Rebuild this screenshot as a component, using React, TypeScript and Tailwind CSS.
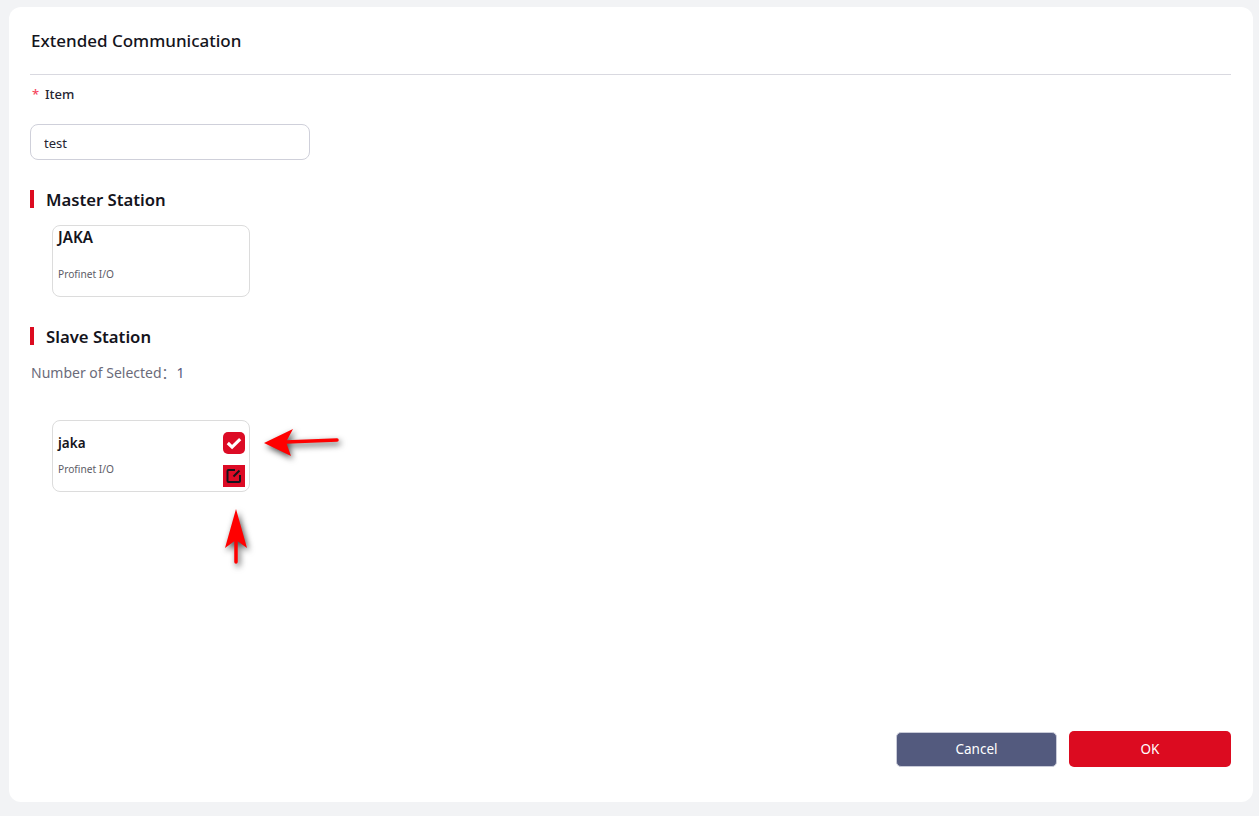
import React from "react";

const font = { fontFamily: '"Noto Sans", "Open Sans", "Noto Sans CJK SC", sans-serif' };

function SectionTitle({ text, gap, size }: { text: string; gap: string; size: string }) {
  return (
    <div className="flex h-[18px] items-center">
      <div className="h-[18px] w-1 bg-[#dc0b20]" />
      <div className={`${gap} ${size} pt-[2px] leading-[18px] font-semibold text-[#14141c]`}>{text}</div>
    </div>
  );
}

function Arrow({ className, d, head }: { className: string; d: string; head: string }) {
  return (
    <svg className={className} viewBox="0 0 90 70" width="90" height="70" style={{ filter: "drop-shadow(2px 3px 3px rgba(0,0,0,0.7))" }}>
      <path d={d} stroke="#ff0000" strokeWidth="3.5" strokeLinecap="round" fill="none" />
      <path d={head} fill="#ff0000" />
    </svg>
  );
}

export default function App() {
  return (
    <div className="relative h-[816px] w-[1259px] overflow-hidden bg-[#f2f3f5] pt-[7px] pr-[6px] pb-[14px] pl-[9px]" style={font}>
      <div className="relative flex h-full flex-col rounded-[12px] bg-white pr-[22px] pl-[21px]">
        <div className="flex h-[68px] items-center border-b border-[#d9d9e0] pl-px text-[17px] font-medium text-[#14141c]">
          Extended Communication
        </div>
        <div className="mt-[11px] flex h-[18px] items-center text-[13px] font-medium text-[#252532]">
          <span className="ml-[2px] w-[13px] text-[#f5455c]">*</span>
          <span>Item</span>
        </div>
        <input
          readOnly
          value="test"
          className="mt-[20px] h-9 w-[280px] rounded-[8px] border border-[#cfd0da] bg-white px-[13px] pt-[2px] text-[13px] text-[#252532] outline-none"
        />
        <div className="mt-[30px]">
          <SectionTitle text="Master Station" gap="ml-3" size="text-[16.7px]" />
        </div>
        <div className="mt-[17px] ml-[22px] flex h-[72px] w-[198px] flex-col rounded-[8px] border border-[#dcdcdc] px-[5px]">
          <div className="mt-[2px] text-[15.2px] leading-[18px] font-semibold text-[#14141c]">JAKA</div>
          <div className="mt-[21px] text-[10.2px] leading-[14px] text-[#5c5c66]">Profinet I/O</div>
        </div>
        <div className="mt-[30px]">
          <SectionTitle text="Slave Station" gap="ml-[12px]" size="text-[16.7px]" />
        </div>
        <div className="mt-[17px] flex h-[20px] items-center text-[14px] text-[#6b6b7a]">
          <span className="ml-px">Number of Selected：</span>
          <span className="ml-px text-[#55597e]">1</span>
        </div>
        <div className="relative mt-[38px] ml-[22px] h-[72px] w-[198px] rounded-[8px] border border-[#dcdcdc] px-[5px]">
          <div className="mt-[13px] text-[13.5px] leading-[18px] font-semibold text-[#14141c]">jaka</div>
          <div className="mt-[10px] text-[10.2px] leading-[14px] text-[#5c5c66]">Profinet I/O</div>
          <div className="absolute top-[11px] right-[4px] flex h-[22px] w-[22px] items-center justify-center rounded-[5px] bg-[#dc0b25]">
            <svg width="18" height="18" viewBox="0 0 16 16" fill="none">
              <path d="M2.5 8 L6.3 11.6 L13.5 4.5" stroke="#fff" strokeWidth="2.8" />
            </svg>
          </div>
          <div className="absolute top-[44px] right-[4px] flex h-[22px] w-[22px] items-center justify-center bg-[#dc0b25]">
            <svg width="16" height="16" viewBox="0 0 16 16" fill="none">
              <path d="M9 2 H2.5 Q1.5 2 1.5 3 V13 Q1.5 14 2.5 14 H13 Q14 14 14 13 V7" stroke="#14141c" strokeWidth="2" />
              <path d="M7.5 8.5 L13.5 2.5" stroke="#14141c" strokeWidth="2" />
            </svg>
          </div>
        </div>
        <div className="mt-auto mb-[35px] flex justify-end gap-3">
          <button className="mt-px h-[35px] w-[161px] rounded-[5px] border border-[#c9cbd8] bg-[#535a7e] text-[13.5px] text-white">Cancel</button>
          <button className="h-9 w-[162px] rounded-[5px] bg-[#dc0b20] text-[13.5px] text-white">OK</button>
        </div>
      </div>
      <Arrow className="absolute top-[407px] left-[258px]" d="M28 35 L79 33" head="M6 36 L35 22 L28 35 L33 49 Z" />
      <Arrow className="absolute top-[505px] left-[190px]" d="M46 33 L46 57" head="M46 4 L57 43 L46 35 L35 43 Z" />
    </div>
  );
}
